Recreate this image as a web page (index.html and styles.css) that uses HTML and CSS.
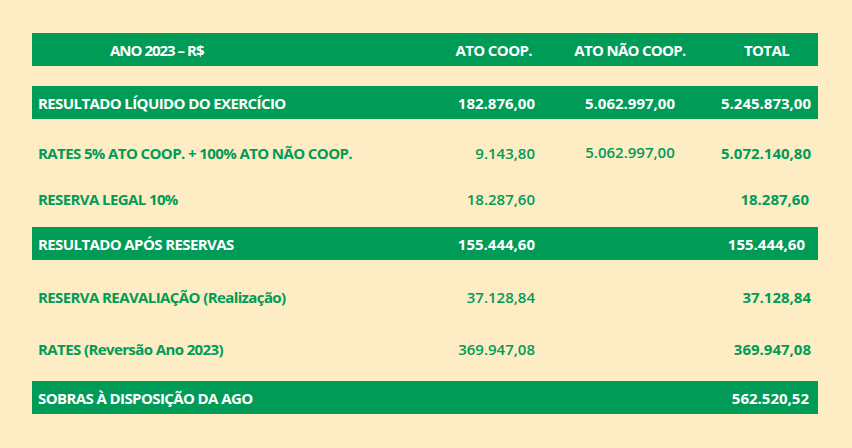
FILE: index.html
```html
<!DOCTYPE html>
<html lang="pt-BR">
<head>
<meta charset="utf-8">
<title>Sobras 2023</title>
<link rel="stylesheet" href="styles.css">
</head>
<body>
<main class="table">
  <div class="row bar head">
    <div class="label head-label">ANO 2023 – R$</div>
    <div class="c1 head-c1">ATO COOP.</div>
    <div class="c2 head-c2">ATO NÃO COOP.</div>
    <div class="c3 head-c3">TOTAL</div>
  </div>
  <div class="row bar r-liquido">
    <div class="label">RESULTADO LÍQUIDO DO EXERCÍCIO</div>
    <div class="c1 num">182.876,00</div>
    <div class="c2 num">5.062.997,00</div>
    <div class="c3 num">5.245.873,00</div>
  </div>
  <div class="row plain r-rates">
    <div class="label">RATES 5% ATO COOP. + 100% ATO NÃO COOP.</div>
    <div class="c1 num light">9.143,80</div>
    <div class="c2 num light up">5.062.997,00</div>
    <div class="c3 num">5.072.140,80</div>
  </div>
  <div class="row plain r-legal">
    <div class="label">RESERVA LEGAL 10%</div>
    <div class="c1 num light">18.287,60</div>
    <div class="c2"></div>
    <div class="c3 num shift">18.287,60</div>
  </div>
  <div class="row bar r-apos">
    <div class="label">RESULTADO APÓS RESERVAS</div>
    <div class="c1 num">155.444,60</div>
    <div class="c2"></div>
    <div class="c3 num shift-more">155.444,60</div>
  </div>
  <div class="row plain r-reaval">
    <div class="label">RESERVA REAVALIAÇÃO (Realização)</div>
    <div class="c1 num light">37.128,84</div>
    <div class="c2"></div>
    <div class="c3 num">37.128,84</div>
  </div>
  <div class="row plain r-reversao">
    <div class="label">RATES (Reversão Ano 2023)</div>
    <div class="c1 num light">369.947,08</div>
    <div class="c2"></div>
    <div class="c3 num">369.947,08</div>
  </div>
  <div class="row bar r-sobras">
    <div class="label">SOBRAS À DISPOSIÇÃO DA AGO</div>
    <div class="c1"></div>
    <div class="c2"></div>
    <div class="c3 num shift">562.520,52</div>
  </div>
</main>
</body>
</html>
```
FILE: styles.css
```css
html, body {
  margin: 0;
  padding: 0;
  background: #feedc4;
}
body {
  width: 852px;
  height: 448px;
  overflow: hidden;
  font-family: "Open Sans", "Noto Sans", sans-serif;
  font-weight: 700;
  font-size: 15px;
  letter-spacing: -0.6px;
}
.table {
  padding-top: 33px;
  padding-left: 32px;
}
.row {
  display: grid;
  grid-template-columns: 408px 105px 168px 105px;
  width: 786px;
  height: 33px;
  align-items: center;
}
.bar {
  background: #009b57;
  color: #ffffff;
}
.plain {
  color: #009b57;
  height: 34px;
}
.label {
  padding-left: 6px;
  white-space: nowrap;
}
.num {
  letter-spacing: 0;
  white-space: nowrap;
}
.c1 {
  text-align: right;
  padding-right: 10px;
}
.c2 {
  text-align: center;
  padding-left: 2px;
}
.c3 {
  text-align: right;
  padding-right: 7px;
}
.light {
  font-weight: 600;
}
.up {
  margin-top: -3px;
}
.shift { padding-right: 9px; }
.shift-more { padding-right: 13px; }
.head-label { padding-left: 78px; letter-spacing: -1px; }
.head-c1 { padding-right: 13px; }
.head-c2 { letter-spacing: -0.7px; }
.head-c3 { text-align: center; padding-right: 0; padding-left: 2px; }
.r-liquido { margin-top: 20px; }
.r-rates { margin-top: 17px; }
.r-legal { margin-top: 12px; }
.r-apos { margin-top: 11px; }
.r-reaval { margin-top: 20px; }
.r-reversao { margin-top: 18px; }
.r-sobras { margin-top: 15px; }
```
